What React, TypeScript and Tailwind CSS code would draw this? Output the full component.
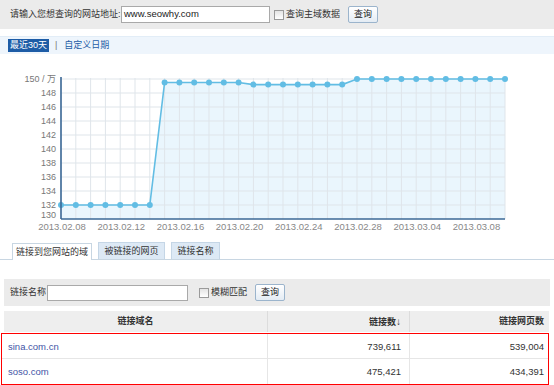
const days = [
  132, 132, 132, 132, 132, 132, 132,
  149.5, 149.5, 149.5, 149.5, 149.5, 149.5,
  149.2, 149.2, 149.2, 149.2, 149.2, 149.2, 149.2,
  150, 150, 150, 150, 150, 150, 150, 150, 150, 150, 150,
];

const X0 = 61;
const STEP = 14.8;
const yOf = (v: number) => 219 - (v - 130) * 7;

const Chart = () => {
  const pts = days.map((v, i) => [X0 + i * STEP, yOf(v)] as const);
  const line = pts.map(([x, y]) => `${x},${y}`).join(" ");
  const right = X0 + (days.length - 1) * STEP;
  const yTicks = [148, 146, 144, 142, 140, 138, 136, 134, 132];
  const xLabels = ["2013.02.08", "2013.02.12", "2013.02.16", "2013.02.20", "2013.02.24", "2013.02.28", "2013.03.04", "2013.03.08"];

  return (
    <svg width="554" height="180" viewBox="0 54 554 180" className="block">
      <polygon points={`${X0},219 ${line} ${right},219`} fill="#eaf6fd" />
      {/* grid */}
      {days.map((_, i) => (
        <line key={i} x1={X0 + i * STEP} y1={78} x2={X0 + i * STEP} y2={219} stroke="#dfe5ea" strokeWidth="1" />
      ))}
      {[150, ...yTicks].map((v) => (
        <line key={v} x1={X0} y1={yOf(v)} x2={right} y2={yOf(v)} stroke="#dfe5ea" strokeWidth="1" />
      ))}
      <polyline points={line} fill="none" stroke="#62bde4" strokeWidth="1.6" />
      {pts.map(([x, y], i) => (
        <circle key={i} cx={x} cy={y} r="3" fill="#62bde4" />
      ))}
      {/* axes */}
      <line x1={X0} y1={77} x2={X0} y2={219} stroke="#3b6896" strokeWidth="1.6" />
      <line x1={X0} y1={219} x2={right} y2={219} stroke="#3b6896" strokeWidth="1.6" />
      <g fontSize="9" fill="#777" fontFamily="'Liberation Sans', 'Noto Sans CJK SC', sans-serif" textAnchor="end">
        <text x={56} y={82}>150 / 万</text>
        {yTicks.map((v) => (
          <text key={v} x={56} y={yOf(v) + 3}>{v}</text>
        ))}
        <text x={56} y={218}>130</text>
      </g>
      <g fontSize="9.5" fill="#888" fontFamily="'Liberation Sans', sans-serif" textAnchor="middle">
        {xLabels.map((t, i) => (
          <text key={t} x={X0 + i * 4 * STEP + 1} y={230}>{t}</text>
        ))}
      </g>
    </svg>
  );
};

const Btn = ({ children }: { children: string }) => (
  <button className="h-[17px] px-[5px] border border-[#9bb4cc] rounded-[2px] bg-gradient-to-b from-white to-[#e4ecf4] text-[9px] text-[#222] leading-none">
    {children}
  </button>
);

const Check = () => (
  <span className="inline-block w-[10px] h-[10px] border border-[#9a9a9a] bg-gradient-to-b from-[#e4e4e4] to-white" />
);

const rows = [
  { domain: "sina.com.cn", links: "739,611", pages: "539,004" },
  { domain: "soso.com", links: "475,421", pages: "434,391" },
];

export default function App() {
  return (
    <div className="w-[554px] h-[385px] overflow-hidden bg-white text-[9px] text-[#333] font-['Liberation_Sans','Noto_Sans_CJK_SC',sans-serif] whitespace-nowrap">
      {/* search */}
      <div className="h-[29px] bg-[#ebebeb] flex items-center pl-[10px]">
        <span className="w-[111px]">请输入您想查询的网站地址:</span>
        <div className="w-[149px] h-[17px] border border-[#a9a9a9] bg-white flex items-center px-[2px] text-[9.5px] text-[#222]">
          www.seowhy.com
        </div>
        <span className="ml-[4px] flex items-center gap-[2px]">
          <Check />
          <span>查询主域数据</span>
        </span>
        <span className="ml-[8px]">
          <Btn>查询</Btn>
        </span>
      </div>

      {/* range */}
      <div className="mt-[7px] h-[18px] bg-[#eef5fc] border-t border-[#e2edf7] flex items-center pl-[8px]">
        <span className="bg-[#1d5ca6] text-white px-[2px] leading-[13px]">最近30天</span>
        <span className="ml-[6px] text-[#777]">|</span>
        <span className="ml-[7px] text-[#1d5ca6]">自定义日期</span>
      </div>

      <Chart />

      {/* tabs */}
      <div className="mt-[8px] h-[18px] flex items-end gap-[6px] pl-[12px] border-b border-[#c8d6e2]">
        <div className="h-[17px] w-[80px] border border-b-0 border-[#c8d6e2] bg-white text-center leading-[16px] -mb-px pb-px">链接到您网站的域</div>
        <div className="h-[17px] w-[67px] border border-b-0 border-[#c5d6e6] bg-[#dde9f5] text-center leading-[16px]">被链接的网页</div>
        <div className="h-[17px] w-[49px] border border-b-0 border-[#c5d6e6] bg-[#dde9f5] text-center leading-[16px]">链接名称</div>
      </div>

      {/* filter */}
      <div className="mt-[19px] mx-[4px] h-[27px] bg-[#ebebeb] flex items-center pl-[6px]">
        <span className="w-[37px]">链接名称</span>
        <div className="w-[141px] h-[16px] border border-[#a9a9a9] bg-white" />
        <span className="ml-[11px] flex items-center gap-[2px]">
          <Check />
          <span>模糊匹配</span>
        </span>
        <span className="ml-[8px]">
          <Btn>查询</Btn>
        </span>
      </div>

      {/* table */}
      <div className="mt-[5px] ml-[1px] w-[548px]">
        <div className="flex h-[21px] ml-[3px] bg-[#eeeeee] font-bold text-[#333] items-center">
          <div className="w-[264px] text-center border-r border-[#dcdcdc] h-full leading-[21px]">链接域名</div>
          <div className="w-[142px] text-right pr-[8px] border-r border-[#dcdcdc] h-full leading-[21px]">链接数<span className="text-[10px]">↓</span></div>
          <div className="flex-1 text-right pr-[5px] leading-[21px]">链接网页数</div>
        </div>
        <div className="mt-[1px] border border-[#ff0000] text-[9.5px]">
          {rows.map((r, i) => (
            <div key={r.domain} className={`flex h-[25px] items-center ${i === 0 ? "border-b border-[#e6e6e6]" : ""}`}>
              <div className="w-[266px] pl-[6px] text-[#3f55a6] h-full leading-[25px] border-r border-[#e6e6e6]">{r.domain}</div>
              <div className="w-[142px] text-right pr-[8px] h-full leading-[25px] border-r border-[#e6e6e6]">{r.links}</div>
              <div className="flex-1 text-right pr-[4px] leading-[25px]">{r.pages}</div>
            </div>
          ))}
        </div>
      </div>
    </div>
  );
}
